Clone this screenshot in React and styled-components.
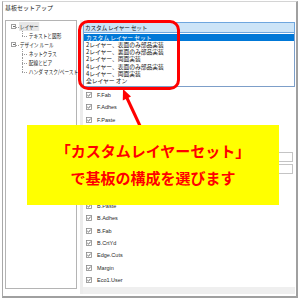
import React from 'react';
import styled, { createGlobalStyle } from 'styled-components';

const GlobalStyle = createGlobalStyle`
  html, body {
    margin: 0;
    padding: 0;
    background: #ffffff;
  }
  body {
    font-family: "Noto Sans CJK JP", "Liberation Sans", sans-serif;
  }
  * {
    box-sizing: border-box;
  }
`;

const Page = styled.div`
  position: relative;
  width: 300px;
  height: 300px;
  padding: 1px 2px 2px 2px;
  overflow: hidden;
  background: #ffffff;
`;

const Frame = styled.div`
  height: 100%;
  display: flex;
  flex-direction: column;
  border-top: 1px solid #d4d4d4;
  border-left: 1px solid #a8a8a8;
  border-right: 2px solid #a0a0a0;
  border-bottom: 2px solid #a0a0a0;
`;

const Title = styled.div`
  height: 12px;
  line-height: 12px;
  margin-bottom: 6px;
  padding-left: 2px;
  font-size: 6px;
  color: #222;
  white-space: nowrap;
`;

const Body = styled.div`
  flex: 1;
  display: flex;
  gap: 3px;
  padding: 0 1px 2px 2px;
  min-height: 0;
`;

// left tree
const TreePanel = styled.div`
  width: 72px;
  height: 269px;
  flex-shrink: 0;
  border: 1px solid #b4b4b4;
  padding-top: 1px;
`;

const TreeRow = styled.div`
  display: flex;
  align-items: center;
  height: 9px;
  padding-left: ${p => (p.$child ? 16 : 5)}px;
  font-size: 6px;
  color: #222;
  white-space: nowrap;
`;

const Expander = styled.span`
  position: relative;
  width: 5px;
  height: 5px;
  margin-right: 3px;
  border: 1px solid #a0a0a0;
  flex-shrink: 0;

  &::before {
    content: '';
    position: absolute;
    left: 0.5px;
    right: 0.5px;
    top: 1px;
    border-top: 1px solid #707070;
  }
  &::after {
    content: '';
    position: absolute;
    left: 4px;
    width: 3px;
    top: 1.5px;
    border-top: 1px dotted #a0a0a0;
  }
`;

const Branch = styled.span`
  position: relative;
  width: 6px;
  align-self: stretch;
  flex-shrink: 0;

  &::before {
    content: '';
    position: absolute;
    left: 0;
    top: 0;
    bottom: ${p => (p.$last ? '50%' : '0')};
    border-left: 1px dotted #9a9a9a;
  }
  &::after {
    content: '';
    position: absolute;
    left: 0;
    width: 5px;
    top: 50%;
    border-top: 1px dotted #9a9a9a;
  }
`;

// narrow UI font look
const TreeLabel = styled.span`
  display: inline-block;
  padding: 0 1px;
  transform: scaleX(0.78);
  transform-origin: left center;
  background: ${p => (p.$selected ? '#e6e6e6' : 'transparent')};
`;

// right side
const RightPanel = styled.div`
  position: relative;
  flex: 1;
  display: flex;
  flex-direction: column;
  border-left: 3px solid #ececec;
`;

const ComboBox = styled.div`
  height: 11px;
  margin-top: 2px;
  padding-left: 1px;
  display: flex;
  align-items: center;
  border: 1px solid #6ea6de;
  background: #cce4f7;
  font-size: 5.7px;
  letter-spacing: -0.2px;
  color: #111;
  white-space: nowrap;
`;

const DropList = styled.div`
  position: absolute;
  top: 13px;
  left: 0;
  right: 0;
  height: 54px;
  padding-top: 0.5px;
  background: #ffffff;
  border: 1px solid #7d9fc9;
  border-top: none;
  z-index: 2;
`;

const Option = styled.div`
  height: 7.3px;
  line-height: 7.3px;
  padding-left: 2px;
  font-size: 5.8px;
  letter-spacing: -0.05px;
  white-space: nowrap;
  color: ${p => (p.$selected ? '#ffffff' : '#111')};
  background: ${p => (p.$selected ? '#0078d7' : 'transparent')};
`;

const ScrollArea = styled.div`
  flex: 1;
  overflow: hidden;
  padding-top: 43.5px;
`;

const LayerRow = styled.div`
  height: 12.33px;
  display: flex;
  align-items: center;
  gap: 5px;
  padding-left: 3px;
  padding-right: 2px;
  font-family: "Liberation Sans", Arial, sans-serif;
  font-size: 5.5px;
  color: #2a2a2a;
  white-space: nowrap;
`;

const NameInput = styled.div`
  margin-left: auto;
  width: 80px;
  height: 10px;
  border: 1px solid #c4c4c4;
  background: #ffffff;
`;

const HScroll = styled.div`
  height: 7px;
  background: #efefef;
`;

// annotations
const HighlightRing = styled.div`
  position: absolute;
  left: 78px;
  top: 20px;
  width: 102px;
  height: 70px;
  border: 3px solid #ff0000;
  border-radius: 10px;
  z-index: 3;
`;

const ArrowSvg = styled.svg`
  position: absolute;
  left: 110px;
  top: 84px;
  z-index: 3;
`;

const Callout = styled.div`
  position: absolute;
  left: 27px;
  top: 125px;
  width: 252px;
  height: 80px;
  display: flex;
  flex-direction: column;
  align-items: center;
  justify-content: center;
  padding-bottom: 3px;
  background: #ffff00;
  color: #ff0000;
  font-family: "Noto Sans CJK JP", sans-serif;
  font-weight: bold;
  font-size: 15px;
  line-height: 27px;
  white-space: nowrap;
  z-index: 4;
`;

const CheckBox = () => (
  <svg width="6" height="6" viewBox="0 0 6 6" style={{ flexShrink: 0 }}>
    <rect x="0.5" y="0.5" width="5" height="5" fill="#fff" stroke="#8a8a8a" strokeWidth="0.8" />
    <path d="M1.3 3 L2.5 4.2 L4.7 1.6" fill="none" stroke="#4a4a4a" strokeWidth="0.8" />
  </svg>
);

const options = [
  'カスタム レイヤー セット',
  '2レイヤー、表面のみ部品実装',
  '2レイヤー、裏面のみ部品実装',
  '2レイヤー、両面実装',
  '4レイヤー、表面のみ部品実装',
  '4レイヤー、両面実装',
  '全レイヤー オン',
];

const layers = [
  { name: 'F.CrtYd' },
  { name: 'F.Fab' },
  { name: 'F.Adhes' },
  { name: 'F.Paste' },
  { name: 'F.SilkS' },
  { name: 'F.Mask' },
  { name: 'F.Cu', copper: true },
  { name: 'B.Cu', copper: true },
  { name: 'B.Mask' },
  { name: 'B.SilkS' },
  { name: 'B.Paste' },
  { name: 'B.Adhes' },
  { name: 'B.Fab' },
  { name: 'B.CrtYd' },
  { name: 'Edge.Cuts' },
  { name: 'Margin' },
  { name: 'Eco1.User' },
];

export default function App() {
  return (
    <Page>
      <GlobalStyle />
      <Frame>
        <Title>基板セットアップ</Title>
        <Body>
          <TreePanel>
            <TreeRow>
              <Expander />
              <TreeLabel $selected>レイヤー</TreeLabel>
            </TreeRow>
            <TreeRow $child>
              <Branch $last />
              <TreeLabel>テキストと図形</TreeLabel>
            </TreeRow>
            <TreeRow>
              <Expander />
              <TreeLabel>デザイン ルール</TreeLabel>
            </TreeRow>
            <TreeRow $child>
              <Branch />
              <TreeLabel>ネットクラス</TreeLabel>
            </TreeRow>
            <TreeRow $child>
              <Branch />
              <TreeLabel>配線とビア</TreeLabel>
            </TreeRow>
            <TreeRow $child>
              <Branch $last />
              <TreeLabel>ハンダ マスク/ペースト</TreeLabel>
            </TreeRow>
          </TreePanel>

          <RightPanel>
            <ComboBox>カスタム レイヤー セット</ComboBox>
            <DropList>
              {options.map((o, i) => (
                <Option key={o} $selected={i === 0}>{o}</Option>
              ))}
            </DropList>
            <ScrollArea>
              {layers.map(l => (
                <LayerRow key={l.name}>
                  <CheckBox />
                  <span>{l.name}</span>
                  {l.copper && <NameInput />}
                </LayerRow>
              ))}
            </ScrollArea>
            <HScroll />
          </RightPanel>
        </Body>
      </Frame>

      <HighlightRing />
      <ArrowSvg width="40" height="50" viewBox="0 0 40 50">
        <line x1="31" y1="44" x2="16.5" y2="13" stroke="#ff0000" strokeWidth="3" />
        <polygon points="13,5 21,12.6 12.8,16.4" fill="#ff0000" />
      </ArrowSvg>
      <Callout>
        <div>「カスタムレイヤーセット」</div>
        <div>で基板の構成を選びます</div>
      </Callout>
    </Page>
  );
}
